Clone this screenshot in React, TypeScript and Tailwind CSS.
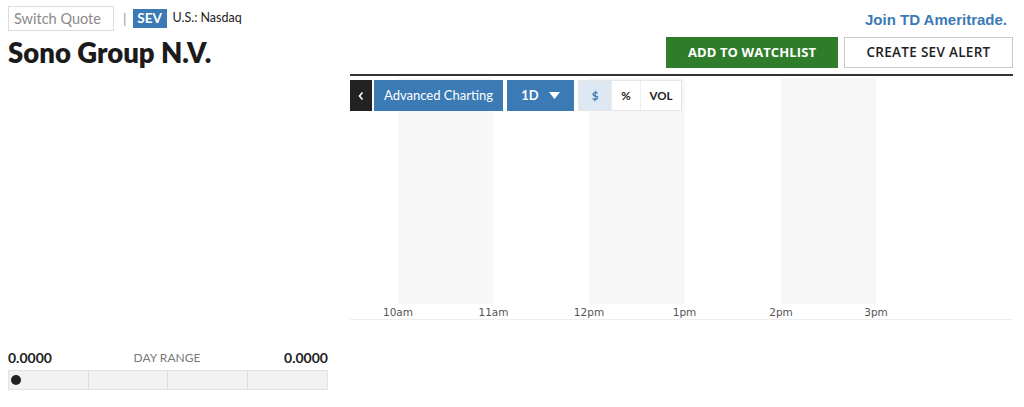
import React from "react";

const hours = [
  { label: "10am", x: 48 },
  { label: "11am", x: 143.5 },
  { label: "12pm", x: 239 },
  { label: "1pm", x: 334.5 },
  { label: "2pm", x: 431 },
  { label: "3pm", x: 526 },
];

function Chart() {
  return (
    <svg width="663" height="244" viewBox="0 0 663 244" className="block">
      <rect x="48" y="0" width="95.5" height="226" fill="#f7f7f7" />
      <rect x="239" y="0" width="95.5" height="226" fill="#f7f7f7" />
      <rect x="431" y="0" width="95" height="226" fill="#f7f7f7" />
      {hours.map((h) => (
        <text
          key={h.label}
          x={h.x}
          y="238"
          textAnchor="middle"
          fontFamily="'DejaVu Sans', sans-serif"
          fontSize="10.5"
          fill="#555"
        >
          {h.label}
        </text>
      ))}
      <line x1="0" y1="241.5" x2="663" y2="241.5" stroke="#eeeeee" strokeWidth="1" />
    </svg>
  );
}

export default function App() {
  return (
    <div
      className="w-[1024px] h-[407px] bg-white overflow-hidden flex"
      style={{ fontFamily: "Lato, 'Open Sans', sans-serif" }}
    >
      {/* Left column */}
      <div className="w-[350px] pl-2 pr-[22px] flex flex-col">
        <div className="flex items-center mt-[6px] h-[25px]">
          <div className="w-[106px] h-[25px] border border-[#dcdcdc] flex items-center pl-[5px] text-[14.5px] text-[#8a8a8a]">
            Switch Quote
          </div>
          <span className="ml-[9px] text-[#999] text-[14px] leading-none">|</span>
          <span className="ml-[6px] h-[19px] w-[34px] bg-[#3b7ab5] text-white text-[13.5px] font-bold flex items-center justify-center leading-none">
            SEV
          </span>
          <span className="ml-[6px] text-[12.5px] text-[#222]">U.S.: Nasdaq</span>
        </div>
        <h1 className="mt-[6px] text-[27.5px] font-extrabold text-[#1b1b1b] leading-[32px]">
          Sono Group N.V.
        </h1>
        <div className="mt-auto mb-[17px]">
          <div className="flex items-end justify-between h-[14px]">
            <span className="text-[14px] font-bold text-[#222] leading-none">0.0000</span>
            <span className="text-[12px] text-[#7a7a7a] leading-none mb-[1px] mr-[2px]">DAY RANGE</span>
            <span className="text-[14px] font-bold text-[#222] leading-none">0.0000</span>
          </div>
          <div className="mt-[5px] h-[20px] border border-[#e2e2e2] bg-[#f2f2f2] grid grid-cols-4 relative">
            <div className="border-r border-[#dcdcdc]" />
            <div className="border-r border-[#dcdcdc]" />
            <div className="border-r border-[#dcdcdc]" />
            <div />
            <span className="absolute left-[2px] top-[4px] w-[10px] h-[10px] rounded-full bg-[#222]" />
          </div>
        </div>
      </div>

      {/* Right column */}
      <div className="w-[663px] flex flex-col">
        <div className="h-[37px] flex justify-end items-start pt-[12px] pr-[6px]">
          <span
            className="text-[15px] font-bold text-[#3b7ab5] leading-none"
            style={{ fontFamily: "'Liberation Sans', Arial, sans-serif" }}
          >
            Join TD Ameritrade.
          </span>
        </div>
        <div className="flex justify-end gap-[6px] h-[31px]">
          <button
            className="w-[172px] h-[31px] bg-[#2f7d2b] text-white text-[13px] font-bold tracking-[0.1px]"
            style={{ fontFamily: "'Open Sans', sans-serif" }}
          >
            ADD TO WATCHLIST
          </button>
          <button
            className="w-[169px] h-[31px] bg-white border border-[#c8c8c8] text-[#222] text-[13.5px] font-semibold tracking-[0.3px]"
            style={{ fontFamily: "'Open Sans', sans-serif" }}
          >
            CREATE SEV ALERT
          </button>
        </div>
        <div className="mt-[6px] h-[2px] bg-[#333]" />
        <div className="mt-[2px] relative">
          <Chart />
          <div className="absolute left-0 top-[2px] flex h-[31px]">
            <div className="w-[22px] bg-[#222] flex items-center justify-center">
              <svg width="8" height="10" viewBox="0 0 8 10">
                <path d="M5.5 1.5 L2.5 5 L5.5 8.5" fill="none" stroke="white" strokeWidth="1.6" />
              </svg>
            </div>
            <div className="ml-[2px] w-[129px] bg-[#3b7ab5] text-white text-[13px] flex items-center justify-center">
              Advanced Charting
            </div>
            <div className="ml-[4px] w-[67px] bg-[#3b7ab5] text-white text-[13px] font-bold flex items-center justify-center gap-[10px]">
              <span>1D</span>
              <svg width="11" height="8" viewBox="0 0 11 8">
                <path d="M0 0 L11 0 L5.5 7 Z" fill="white" />
              </svg>
            </div>
            <div className="ml-[4px] flex border border-[#e6e6e6] bg-white text-[11.5px] font-bold">
              <div className="w-[32px] bg-[#dde8f2] text-[#3b7ab5] flex items-center justify-center">$</div>
              <div className="w-[29px] border-l border-[#eeeeee] text-[#222] flex items-center justify-center">%</div>
              <div className="w-[41px] border-l border-[#eeeeee] text-[#222] flex items-center justify-center">VOL</div>
            </div>
          </div>
        </div>
      </div>
    </div>
  );
}
